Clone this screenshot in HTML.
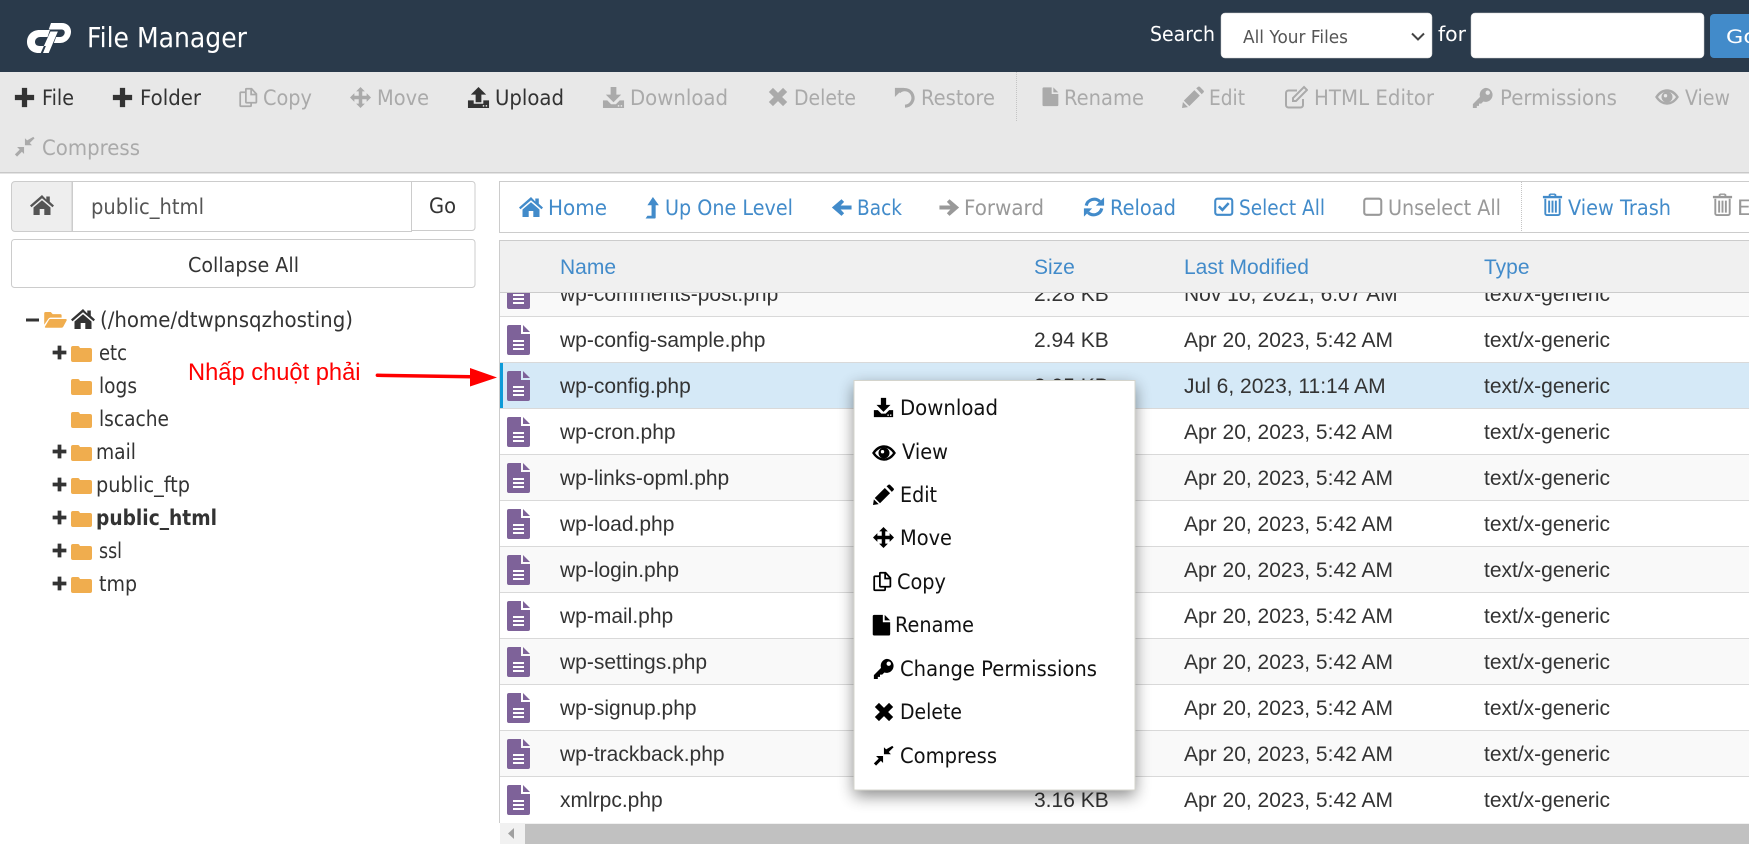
<!DOCTYPE html>
<html><head><meta charset="utf-8"><title>File Manager</title>
<style>
html,body{margin:0;padding:0;background:#fff;width:1749px;height:844px;overflow:hidden}
svg{display:block}
text{font-family:"DejaVu Sans",sans-serif;white-space:pre}
.t{font-size:21.5px}
.d{fill:#333}.g{fill:#aaa}.b{fill:#428bca}.y{fill:#999}
.a,.a text{font-family:"Liberation Sans",Arial,sans-serif;font-size:21px}
.m{font-size:21px;fill:#111}
.n{font-size:21.5px;fill:#333}
</style></head><body>
<svg xmlns="http://www.w3.org/2000/svg" width="1749" height="844" viewBox="0 0 1749 844">
<defs>
<filter id="sh" x="-20%" y="-20%" width="140%" height="140%"><feGaussianBlur stdDeviation="8"/></filter>
<symbol id="plus" viewBox="0 0 24 24"><path fill="currentColor" d="M9 1h6v8h8v6h-8v8H9v-8H1V9h8z"/></symbol>
<symbol id="copy" viewBox="0 0 24 24"><path fill="none" stroke="currentColor" stroke-width="2" d="M9 6H3.500a1 1 0 0 0-1 1v14a1 1 0 0 0 1 1H14a1 1 0 0 0 1-1v-3.500M9 2.500V17a1 1 0 0 0 1 1h10a1 1 0 0 0 1-1V8l-5.500-6H9.500a.5.500 0 0 0-.5.500zM15 2v6.500h6"/></symbol>
<symbol id="move" viewBox="0 0 24 24"><path fill="currentColor" d="M12 0l5 5h-3v5h5V7l5 5-5 5v-3h-5v5h3l-5 5-5-5h3v-5H5v3l-5-5 5-5v3h5V5H7z"/></symbol>
<symbol id="upload" viewBox="0 0 24 24"><path fill="currentColor" d="M12 1l8 8h-5v8H9V9H4zM1 15h6v3.500h10V15h6v8H1z"/><path fill="#e8e8e8" d="M16.500 20h1.500v1.500h-1.500zM19.500 20H21v1.500h-1.500z"/></symbol>
<symbol id="download" viewBox="0 0 24 24"><path fill="currentColor" d="M9 1h6v8h5l-8 8-8-8h5zM1 15h4.500l4 4h5l4-4H23v8H1z"/><path fill="#e8e8e8" d="M16.500 20h1.500v1.500h-1.500zM19.500 20H21v1.500h-1.500z"/></symbol>
<symbol id="downloadw" viewBox="0 0 24 24"><path fill="currentColor" d="M9 1h6v8h5l-8 8-8-8h5zM1 15h4.500l4 4h5l4-4H23v8H1z"/><path fill="#fff" d="M16.500 20h1.500v1.500h-1.500zM19.500 20H21v1.500h-1.500z"/></symbol>
<symbol id="times" viewBox="0 0 24 24"><path fill="currentColor" d="M6.500 2L12 7.500 17.500 2 22 6.500 16.500 12l5.500 5.500-4.500 4.500L12 16.500 6.500 22 2 17.500 7.500 12 2 6.500z"/></symbol>
<symbol id="undo" viewBox="0 0 24 24"><path fill="none" stroke="currentColor" stroke-width="3.500" d="M5.500 6.500a9 9 0 1 1 6.500 15.500"/><path fill="currentColor" d="M1 2l10 0-10 10z"/></symbol>
<symbol id="file" viewBox="0 0 24 24"><path fill="currentColor" d="M4.500 1H14v8h8v13a1.500 1.500 0 0 1-1.500 1.500h-16A1.500 1.500 0 0 1 3 22V2.500A1.500 1.500 0 0 1 4.500 1zM16 1l6 6h-6z"/></symbol>
<symbol id="pencil" viewBox="0 0 24 24"><path fill="currentColor" d="M15.500 2.500l2-1.500a1.500 1.500 0 0 1 2 0l4 4a1.500 1.500 0 0 1 0 2l-2 2zM13.500 4.500l6 6L8 22l-6-6zM1 17.500L6.500 23 0 24z"/></symbol>
<symbol id="edit" viewBox="0 0 24 24"><path fill="none" stroke="currentColor" stroke-width="2" d="M19 14v6a2.500 2.500 0 0 1-2.500 2.500h-12A2.500 2.500 0 0 1 2 20V8a2.500 2.500 0 0 1 2.500-2.500H13"/><path fill="none" stroke="currentColor" stroke-width="2" d="M20 2l3 3-11 11H9v-3z"/></symbol>
<symbol id="key" viewBox="0 0 24 24"><path fill="currentColor" fill-rule="evenodd" d="M15.500 1a8 8 0 1 1-2.500 15.600L10.500 19H8v2.500H5.500V24H1v-4.500l8.200-8.200A8 8 0 0 1 15.500 1zM18 4a2.500 2.500 0 1 0 0 5 2.500 2.500 0 0 0 0-5z"/></symbol>
<symbol id="eye" viewBox="0 0 24 24"><path fill="none" stroke="currentColor" stroke-width="2.400" d="M1.500 12C4.500 7.500 8 5.500 12 5.500s7.500 2 10.500 6.500c-3 4.500-6.500 6.500-10.500 6.500S4.500 16.500 1.500 12z"/><path fill="currentColor" fill-rule="evenodd" d="M12 6.500a5.500 5.500 0 1 0 0 11 5.500 5.500 0 0 0 0-11zM10.500 9a1.700 1.700 0 1 1 0 3.400 1.700 1.700 0 0 1 0-3.400z"/></symbol>
<symbol id="compress" viewBox="0 0 24 24"><path fill="currentColor" d="M22 1l1.500 1.500-5.500 5.500 2.500 2.500h-8v-8l2.500 2.500zM3.500 12.500h8v8L9 18l-5.500 5.500L1 21l5.500-5.500z"/></symbol>
<symbol id="home" viewBox="0 0 24 24"><path fill="currentColor" d="M12 2L0 12.500l1.500 1.800L12 5.200l10.500 9.100 1.500-1.800-4.200-3.700V3.500h-3.500v3z"/><path fill="currentColor" d="M12 7.200L3.500 14.500V22h6.200v-6h4.600v6h6.200v-7.500z"/></symbol>
<symbol id="levelup" viewBox="0 0 15 24"><path fill="currentColor" d="M8.500 0L15 9h-3.500v13.500a1 1 0 0 1-1 1H.5l2-3H7V9H2.500z"/></symbol>
<symbol id="aleft" viewBox="0 0 24 24"><path fill="currentColor" d="M12 2.500l3 3-4 4.200h12.500v4.600H11l4 4.200-3 3L1 12z"/></symbol>
<symbol id="aright" viewBox="0 0 24 24"><path fill="currentColor" d="M12 2.500l-3 3 4 4.200H.5v4.600H13l-4 4.200 3 3L23 12z"/></symbol>
<symbol id="reload" viewBox="0 0 24 24"><path fill="none" stroke="currentColor" stroke-width="3.400" d="M3.500 10.500A9 9 0 0 1 18.500 6M20.500 13.500A9 9 0 0 1 5.500 18"/><path fill="currentColor" d="M23 1.500v9h-9zM1 22.500v-9h9z"/></symbol>
<symbol id="check" viewBox="0 0 24 24"><path fill="none" stroke="currentColor" stroke-width="2.300" d="M5 3h14a2.500 2.500 0 0 1 2.500 2.500v13A2.500 2.500 0 0 1 19 21H5a2.500 2.500 0 0 1-2.500-2.500v-13A2.500 2.500 0 0 1 5 3z"/><path fill="none" stroke="currentColor" stroke-width="2.800" d="M6.500 11.500l4 4 7-7.500"/></symbol>
<symbol id="square" viewBox="0 0 24 24"><path fill="none" stroke="currentColor" stroke-width="2.300" d="M5 3h14a2.500 2.500 0 0 1 2.500 2.500v13A2.500 2.500 0 0 1 19 21H5a2.500 2.500 0 0 1-2.500-2.500v-13A2.500 2.500 0 0 1 5 3z"/></symbol>
<symbol id="trash" viewBox="0 0 24 24"><path fill="currentColor" d="M8 3V1.500L9.500.5h5L16 1.500V3h6v2.500H2V3zM10 3h4V2h-4z"/><path fill="none" stroke="currentColor" stroke-width="2" d="M4.500 6v15.500a1.500 1.500 0 0 0 1.500 1.500h12a1.500 1.500 0 0 0 1.500-1.500V6"/><path fill="currentColor" d="M7.500 8h2v12.500h-2zM11 8h2v12.500h-2zM14.500 8h2v12.500h-2z"/></symbol>
<symbol id="folder" viewBox="0 0 21 17"><path fill="currentColor" d="M2 1h5a1.500 1.500 0 0 1 1.300.800L9 3h10a2 2 0 0 1 2 2v10a2 2 0 0 1-2 2H2a2 2 0 0 1-2-2V3a2 2 0 0 1 2-2z"/></symbol>
<symbol id="fopen" viewBox="0 0 24 17"><path fill="currentColor" d="M1.500 0H7l2 2.200h8a1.500 1.500 0 0 1 1.500 1.500V6H6.500a2.500 2.500 0 0 0-2 1.200L0 13.500V1.500A1.500 1.500 0 0 1 1.500 0zM6.500 7.500H23a1 1 0 0 1 .8 1.500l-3.500 6.500a2.500 2.500 0 0 1-2 1.200H1.500a.8.8 0 0 1-.7-1.200L5 8.500a1.500 1.500 0 0 1 1.500-1z"/></symbol>
<symbol id="doc" viewBox="0 0 23 30"><path fill="#7e6299" d="M2 0h12v9h9v19a2 2 0 0 1-2 2H2a2 2 0 0 1-2-2V2a2 2 0 0 1 2-2zM16 0l7 7h-7z"/><path fill="#fff" d="M6 15h11v2H6zM6 19h11v2H6zM6 23h11v2H6z"/></symbol>
</defs>

<!-- header -->
<rect width="1749" height="72" fill="#2a3a4b"/>
<path transform="translate(27 0) scale(1.143 1) translate(-24 0)" fill="#fff" d="M44 30h-9c-6.500 0-11 5-11 12 0 6 4 11 10 11h4l2.500-7H35c-2.500 0-4-1.800-4-4 0-2.800 2-5 4.500-5H42zM47 23h-2l-2 6.500h11c2 0 3 1.300 3 3 0 2.400-2 4.500-4 4.500h-3.500l-2 6H53c5.500 0 9.500-5.500 9.500-11.500 0-5-3.500-8.500-8-8.500zM44.500 31.500h6.500L43 53h-7z"/>
<text x="87" y="47" font-size="27.500" fill="#fff" textLength="160" lengthAdjust="spacingAndGlyphs">File Manager</text>
<text x="1150" y="41" font-size="20" fill="#fff" textLength="65" lengthAdjust="spacingAndGlyphs">Search</text>
<rect x="1221" y="13" width="211" height="45" rx="4" fill="#fff" stroke="#ccc" stroke-width=".5"/>
<text x="1243" y="43" font-size="18" fill="#555" textLength="105" lengthAdjust="spacingAndGlyphs">All Your Files</text>
<path d="M1412 33.500l6 6 6-6" fill="none" stroke="#444" stroke-width="2"/>
<text x="1438" y="41" font-size="20" fill="#fff" textLength="28" lengthAdjust="spacingAndGlyphs">for</text>
<rect x="1471" y="13" width="233" height="45" rx="4" fill="#fff" stroke="#ccc" stroke-width=".5"/>
<path d="M1714 14h35v44h-35a4 4 0 0 1-4-4V18a4 4 0 0 1 4-4z" fill="#428bca"/>
<text x="1726" y="43" font-size="19" fill="#fff" textLength="31" lengthAdjust="spacingAndGlyphs">Go</text>

<!-- action toolbar -->
<rect y="72" width="1749" height="100" fill="#e8e8e8"/>
<rect y="172" width="1749" height="1.500" fill="#c8c8c8"/>
<line x1="1016.500" y1="72" x2="1016.500" y2="122" stroke="#c4c4c4" stroke-dasharray="1 1"/>
<g color="#333">
<use href="#plus" x="14" y="87" width="21" height="21"/>
<use href="#plus" x="112" y="87" width="21" height="21"/>
<use href="#upload" x="467" y="86" width="23" height="23"/>
</g>
<g class="t d">
<text x="42" y="105" textLength="32" lengthAdjust="spacingAndGlyphs">File</text>
<text x="140" y="105" textLength="61" lengthAdjust="spacingAndGlyphs">Folder</text>
<text x="495" y="105" textLength="69" lengthAdjust="spacingAndGlyphs">Upload</text>
</g>
<g color="#aaa">
<use href="#copy" x="238" y="87" width="21" height="21"/>
<use href="#move" x="350" y="87" width="21" height="21"/>
<use href="#download" x="602" y="86" width="23" height="23"/>
<use href="#times" x="767" y="86" width="22" height="22"/>
<use href="#undo" x="894" y="86" width="22" height="22"/>
<use href="#file" x="1040" y="86" width="20" height="21"/>
<use href="#pencil" x="1182" y="86" width="22" height="22"/>
<use href="#edit" x="1284" y="85" width="24" height="24"/>
<use href="#key" x="1472" y="87" width="21" height="21"/>
<use href="#eye" x="1655" y="85" width="24" height="24"/>
<use href="#compress" x="14" y="136" width="21" height="21"/>
</g>
<g class="t g">
<text x="263" y="105" textLength="49" lengthAdjust="spacingAndGlyphs">Copy</text>
<text x="377" y="105" textLength="52" lengthAdjust="spacingAndGlyphs">Move</text>
<text x="630" y="105" textLength="98" lengthAdjust="spacingAndGlyphs">Download</text>
<text x="794" y="105" textLength="62" lengthAdjust="spacingAndGlyphs">Delete</text>
<text x="921" y="105" textLength="74" lengthAdjust="spacingAndGlyphs">Restore</text>
<text x="1064" y="105" textLength="80" lengthAdjust="spacingAndGlyphs">Rename</text>
<text x="1209" y="105" textLength="36" lengthAdjust="spacingAndGlyphs">Edit</text>
<text x="1314" y="105" textLength="120" lengthAdjust="spacingAndGlyphs">HTML Editor</text>
<text x="1500" y="105" textLength="117" lengthAdjust="spacingAndGlyphs">Permissions</text>
<text x="1685" y="105" textLength="45" lengthAdjust="spacingAndGlyphs">View</text>
<text x="42" y="155" textLength="98" lengthAdjust="spacingAndGlyphs">Compress</text>
</g>

<!-- left column -->
<path d="M15 181.500h57v50H15a3.500 3.500 0 0 1-3.500-3.500v-43a3.500 3.500 0 0 1 3.500-3.500z" fill="#eee" stroke="#ccc"/>
<rect x="72.500" y="181.500" width="339" height="50" fill="#fff" stroke="#ccc"/>
<path d="M411.500 181.500H472a3 3 0 0 1 3 3v43a3 3 0 0 1-3 3h-60.500z" fill="#fff" stroke="#ccc"/>
<use href="#home" x="30" y="193" width="24" height="24" color="#555"/>
<text x="91" y="214" class="t" fill="#555" textLength="113" lengthAdjust="spacingAndGlyphs">public_html</text>
<text x="429" y="213" font-size="21" fill="#333" textLength="27" lengthAdjust="spacingAndGlyphs">Go</text>
<rect x="11.500" y="239.500" width="463.500" height="48" rx="3" fill="#fff" stroke="#ccc"/>
<text x="188" y="272" font-size="20.500" fill="#333" textLength="111" lengthAdjust="spacingAndGlyphs">Collapse All</text>

<!-- tree -->
<rect x="26" y="318.500" width="13" height="3" fill="#333"/>
<use href="#fopen" x="44" y="312" width="23" height="16" color="#f0ad4e"/>
<use href="#home" x="71" y="307" width="24" height="24" color="#333"/>
<text x="100" y="327" class="n" textLength="253" lengthAdjust="spacingAndGlyphs">(/home/dtwpnsqzhosting)</text>
<g color="#333">
<use href="#plus" x="52" y="345" width="15" height="15"/>
<use href="#plus" x="52" y="444" width="15" height="15"/>
<use href="#plus" x="52" y="477" width="15" height="15"/>
<use href="#plus" x="52" y="510" width="15" height="15"/>
<use href="#plus" x="52" y="543" width="15" height="15"/>
<use href="#plus" x="52" y="576" width="15" height="15"/>
</g>
<g color="#f0ad4e">
<use href="#folder" x="71" y="345" width="21" height="17"/>
<use href="#folder" x="71" y="378" width="21" height="17"/>
<use href="#folder" x="71" y="411" width="21" height="17"/>
<use href="#folder" x="71" y="444" width="21" height="17"/>
<use href="#folder" x="71" y="477" width="21" height="17"/>
<use href="#folder" x="71" y="510" width="21" height="17"/>
<use href="#folder" x="71" y="543" width="21" height="17"/>
<use href="#folder" x="71" y="576" width="21" height="17"/>
</g>
<g class="n">
<text x="99" y="360" textLength="28" lengthAdjust="spacingAndGlyphs">etc</text>
<text x="99" y="393" textLength="38" lengthAdjust="spacingAndGlyphs">logs</text>
<text x="99" y="426" textLength="70" lengthAdjust="spacingAndGlyphs">lscache</text>
<text x="96" y="459" textLength="40" lengthAdjust="spacingAndGlyphs">mail</text>
<text x="96" y="492" textLength="94" lengthAdjust="spacingAndGlyphs">public_ftp</text>
<text x="96" y="525" font-weight="bold" textLength="121" lengthAdjust="spacingAndGlyphs">public_html</text>
<text x="99" y="558" textLength="23" lengthAdjust="spacingAndGlyphs">ssl</text>
<text x="99" y="591" textLength="38" lengthAdjust="spacingAndGlyphs">tmp</text>
</g>

<!-- annotation -->
<text x="188" y="380" style="font-family:'Liberation Sans','Noto Sans CJK SC',sans-serif;font-size:23.700px" fill="#f00">Nhấp chuột phải</text>
<path d="M377 373.500l94 1.500v3.500l-94-1.500a1.800 1.800 0 0 1 0-3.500z" fill="#f00"/>
<path d="M470 368l27 9.500-27 9z" fill="#f00"/>

<!-- file toolbar -->
<rect x="499.500" y="181.500" width="1260" height="51" fill="#fff" stroke="#ccc"/>
<line x1="1521.500" y1="182" x2="1521.500" y2="232" stroke="#c4c4c4" stroke-dasharray="1 1"/>
<g color="#428bca">
<use href="#home" x="519" y="195" width="24" height="24"/>
<use href="#levelup" x="645" y="197" width="14" height="22"/>
<use href="#aleft" x="831" y="197" width="21" height="21"/>
<use href="#reload" x="1083" y="196" width="22" height="22"/>
<use href="#check" x="1213" y="196" width="21.500" height="21.500"/>
<use href="#trash" x="1541" y="193" width="23" height="23"/>
</g>
<g color="#999">
<use href="#aright" x="939" y="197" width="21" height="21"/>
<use href="#square" x="1362" y="196" width="21.500" height="21.500"/>
<use href="#trash" x="1711" y="193" width="23" height="23"/>
</g>
<g class="t b">
<text x="548" y="215" textLength="59" lengthAdjust="spacingAndGlyphs">Home</text>
<text x="665" y="215" textLength="128" lengthAdjust="spacingAndGlyphs">Up One Level</text>
<text x="857" y="215" textLength="45" lengthAdjust="spacingAndGlyphs">Back</text>
<text x="1110" y="215" textLength="66" lengthAdjust="spacingAndGlyphs">Reload</text>
<text x="1239" y="215" textLength="86" lengthAdjust="spacingAndGlyphs">Select All</text>
<text x="1568" y="215" textLength="103" lengthAdjust="spacingAndGlyphs">View Trash</text>
</g>
<g class="t y">
<text x="964" y="215" textLength="80" lengthAdjust="spacingAndGlyphs">Forward</text>
<text x="1388" y="215" textLength="113" lengthAdjust="spacingAndGlyphs">Unselect All</text>
<text x="1737" y="215">Empty Trash</text>
</g>

<!-- table rows -->
<rect x="499" y="240" width="1250" height="583" fill="#fff"/>
<g fill="#f9f9f9">
<rect x="500" y="270" width="1249" height="46"/>
<rect x="500" y="454" width="1249" height="46"/>
<rect x="500" y="546" width="1249" height="46"/>
<rect x="500" y="638" width="1249" height="46"/>
<rect x="500" y="730" width="1249" height="46"/>
</g>
<rect x="500" y="363" width="1249" height="45.500" fill="#d5e9f7"/>
<rect x="500" y="363" width="3" height="45.500" fill="#0e9bd8"/>
<g fill="#d9d9d9">
<rect x="500" y="316" width="1249" height="1"/><rect x="500" y="362" width="1249" height="1"/>
<rect x="500" y="408" width="1249" height="1"/><rect x="500" y="454" width="1249" height="1"/>
<rect x="500" y="500" width="1249" height="1"/><rect x="500" y="546" width="1249" height="1"/>
<rect x="500" y="592" width="1249" height="1"/><rect x="500" y="638" width="1249" height="1"/>
<rect x="500" y="684" width="1249" height="1"/><rect x="500" y="730" width="1249" height="1"/>
<rect x="500" y="776" width="1249" height="1"/>
</g>
<use href="#doc" x="507" y="279" width="23" height="30"/>
<use href="#doc" x="507" y="325" width="23" height="30"/>
<use href="#doc" x="507" y="371" width="23" height="30"/>
<use href="#doc" x="507" y="417" width="23" height="30"/>
<use href="#doc" x="507" y="463" width="23" height="30"/>
<use href="#doc" x="507" y="509" width="23" height="30"/>
<use href="#doc" x="507" y="555" width="23" height="30"/>
<use href="#doc" x="507" y="601" width="23" height="30"/>
<use href="#doc" x="507" y="647" width="23" height="30"/>
<use href="#doc" x="507" y="693" width="23" height="30"/>
<use href="#doc" x="507" y="739" width="23" height="30"/>
<use href="#doc" x="507" y="785" width="23" height="30"/>
<g class="a" fill="#333">
<text x="560" y="301">wp-comments-post.php</text><text x="1034" y="301">2.28 KB</text><text x="1184" y="301">Nov 10, 2021, 6:07 AM</text><text x="1484" y="301">text/x-generic</text>
<text x="560" y="347">wp-config-sample.php</text><text x="1034" y="347">2.94 KB</text><text x="1184" y="347">Apr 20, 2023, 5:42 AM</text><text x="1484" y="347">text/x-generic</text>
<text x="560" y="393">wp-config.php</text><text x="1034" y="393">3.05 KB</text><text x="1184" y="393">Jul 6, 2023, 11:14 AM</text><text x="1484" y="393">text/x-generic</text>
<text x="560" y="439">wp-cron.php</text><text x="1184" y="439">Apr 20, 2023, 5:42 AM</text><text x="1484" y="439">text/x-generic</text>
<text x="560" y="485">wp-links-opml.php</text><text x="1184" y="485">Apr 20, 2023, 5:42 AM</text><text x="1484" y="485">text/x-generic</text>
<text x="560" y="531">wp-load.php</text><text x="1184" y="531">Apr 20, 2023, 5:42 AM</text><text x="1484" y="531">text/x-generic</text>
<text x="560" y="577">wp-login.php</text><text x="1184" y="577">Apr 20, 2023, 5:42 AM</text><text x="1484" y="577">text/x-generic</text>
<text x="560" y="623">wp-mail.php</text><text x="1184" y="623">Apr 20, 2023, 5:42 AM</text><text x="1484" y="623">text/x-generic</text>
<text x="560" y="669">wp-settings.php</text><text x="1184" y="669">Apr 20, 2023, 5:42 AM</text><text x="1484" y="669">text/x-generic</text>
<text x="560" y="715">wp-signup.php</text><text x="1184" y="715">Apr 20, 2023, 5:42 AM</text><text x="1484" y="715">text/x-generic</text>
<text x="560" y="761">wp-trackback.php</text><text x="1184" y="761">Apr 20, 2023, 5:42 AM</text><text x="1484" y="761">text/x-generic</text>
<text x="560" y="807">xmlrpc.php</text><text x="1034" y="807">3.16 KB</text><text x="1184" y="807">Apr 20, 2023, 5:42 AM</text><text x="1484" y="807">text/x-generic</text>
</g>
<!-- table head -->
<rect x="499" y="240" width="1250" height="53" fill="#f0f0f0"/>
<rect x="499" y="240" width="1250" height="1" fill="#ccc"/>
<rect x="499" y="292" width="1250" height="1" fill="#ccc"/>
<rect x="499" y="240" width="1" height="583" fill="#ccc"/>
<g class="a" fill="#428bca">
<text x="560" y="274">Name</text><text x="1034" y="274">Size</text><text x="1184" y="274">Last Modified</text><text x="1484" y="274">Type</text>
</g>
<!-- scrollbar -->
<rect x="500" y="823" width="1249" height="21" fill="#f1f1f1"/>
<rect x="525" y="824" width="1224" height="20" fill="#c1c1c1"/>
<path d="M514 828v11l-6-5.500z" fill="#a0a0a0"/>

<!-- context menu -->
<rect x="854" y="386" width="281" height="410" fill="#000" opacity=".45" filter="url(#sh)"/>
<rect x="854" y="380.500" width="281" height="409.500" fill="#fff" stroke="#d4d4cc" stroke-width="1"/>
<g color="#000">
<use href="#downloadw" x="873" y="397" width="21" height="21"/>
<use href="#eye" x="872" y="441" width="24" height="24"/>
<use href="#pencil" x="873" y="484" width="21" height="21"/>
<use href="#move" x="873" y="527" width="21" height="21"/>
<use href="#copy" x="872" y="571" width="21" height="21"/>
<use href="#file" x="870" y="614" width="22" height="22"/>
<use href="#key" x="873" y="658" width="21" height="21"/>
<use href="#times" x="873" y="701" width="22" height="22"/>
<use href="#compress" x="873" y="745" width="21" height="21"/>
</g>
<g class="m">
<text x="900" y="415" textLength="98" lengthAdjust="spacingAndGlyphs">Download</text>
<text x="902" y="459" textLength="46" lengthAdjust="spacingAndGlyphs">View</text>
<text x="900" y="502" textLength="37" lengthAdjust="spacingAndGlyphs">Edit</text>
<text x="900" y="545" textLength="52" lengthAdjust="spacingAndGlyphs">Move</text>
<text x="897" y="589" textLength="49" lengthAdjust="spacingAndGlyphs">Copy</text>
<text x="895" y="632" textLength="79" lengthAdjust="spacingAndGlyphs">Rename</text>
<text x="900" y="676" textLength="197" lengthAdjust="spacingAndGlyphs">Change Permissions</text>
<text x="900" y="719" textLength="62" lengthAdjust="spacingAndGlyphs">Delete</text>
<text x="900" y="763" textLength="97" lengthAdjust="spacingAndGlyphs">Compress</text>
</g>
</svg>
</body></html>
